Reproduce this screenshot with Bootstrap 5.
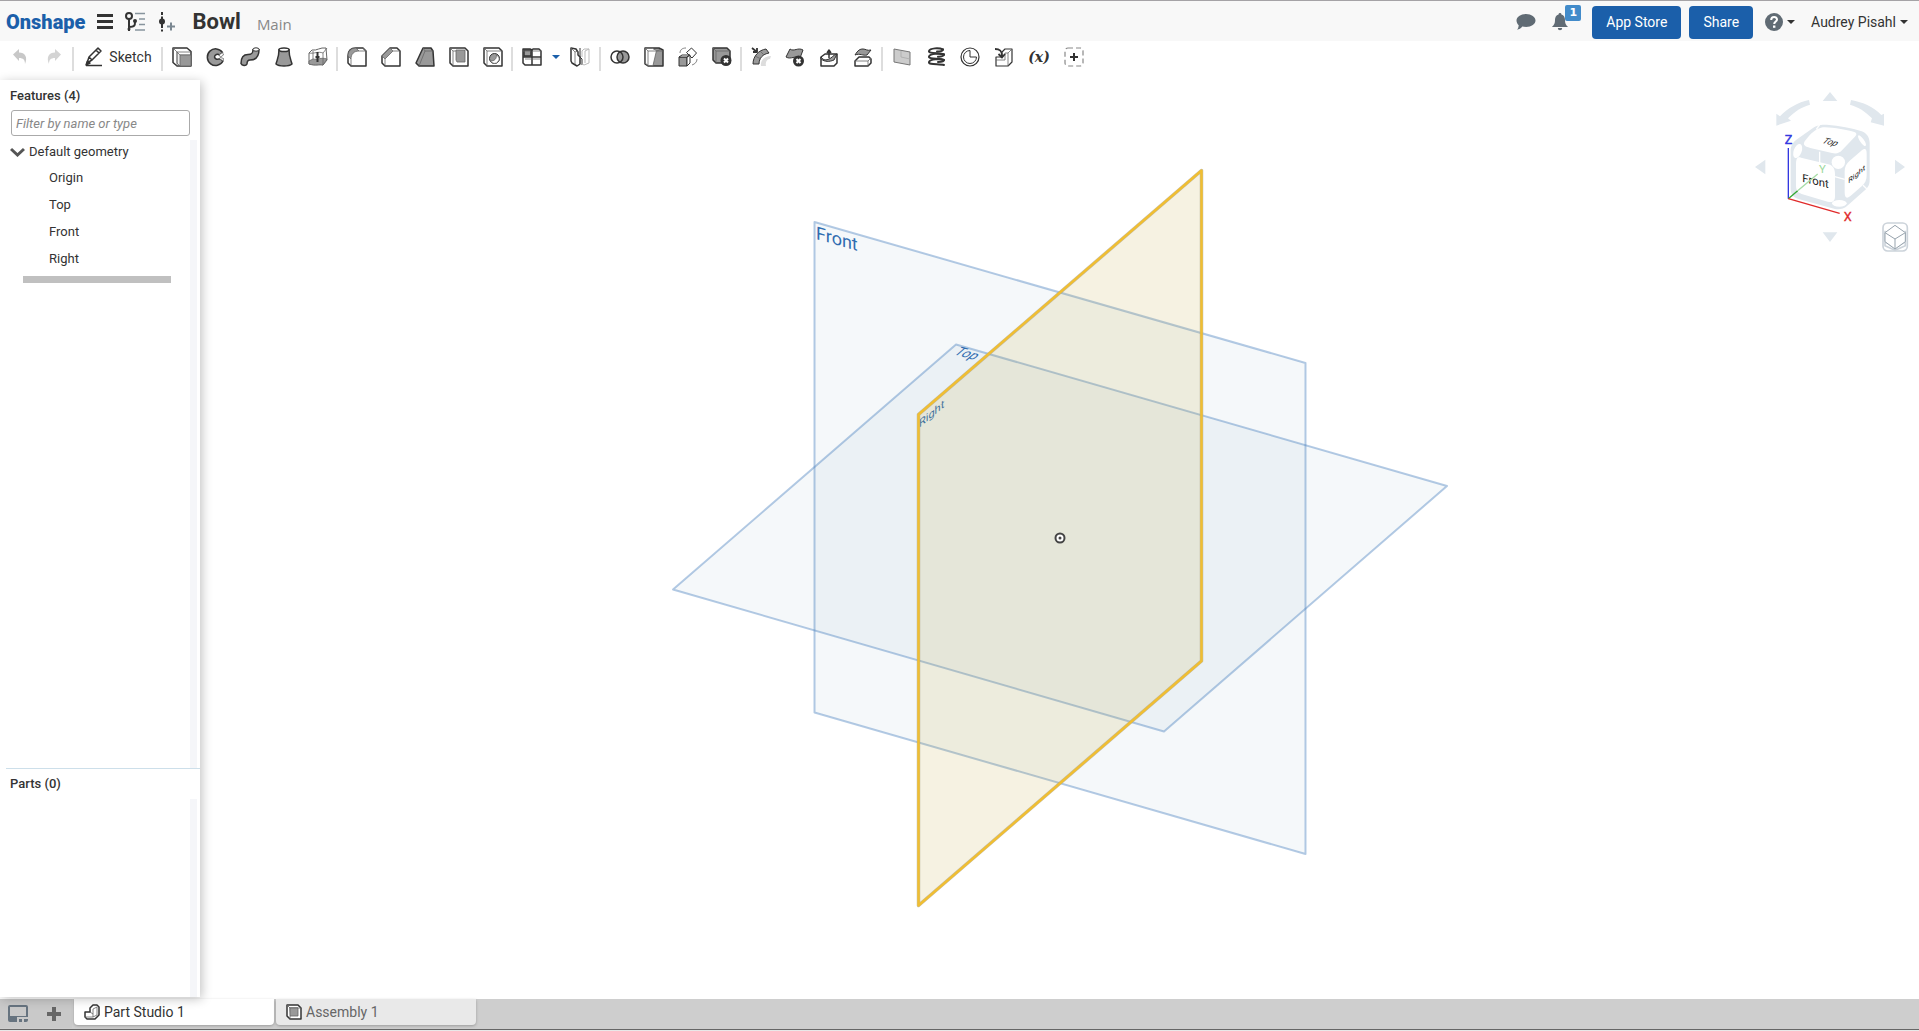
<!DOCTYPE html>
<html lang="en">
<head>
<meta charset="utf-8">
<meta name="viewport" content="width=device-width, initial-scale=1">
<title>Bowl - Onshape</title>
<link rel="stylesheet" href="https://cdn.jsdelivr.net/npm/bootstrap@5.3.0/dist/css/bootstrap.min.css">
<style>
:root { --blue: #1b5faa; --ink: #333; --slate: #606b74; }
body { font-family: Roboto, "Open Sans", sans-serif; font-size: 14px; line-height: 20px; color: var(--ink); background: #fff; }
button { font: inherit; color: inherit; background: none; border: 0; padding: 0; }
svg { display: block; }
.topbar { height: 41px; background: #f8f8f8; border-top: 1px solid #a5a3a6; padding: 2px 11px 0 6px; }
.brand { font-size: 20px; font-weight: 900; color: var(--blue); text-decoration: none; line-height: 24px; }
.doc-title { font-size: 22px; font-weight: 700; line-height: 28px; margin: 0; }
.doc-branch { font-family: "Open Sans", sans-serif; font-size: 15px; color: #888; }
.btn-blue { --bs-btn-bg: var(--blue); --bs-btn-color: #fff; --bs-btn-hover-bg: #174f8e; --bs-btn-hover-color: #fff; background: var(--blue); color: #fff; height: 33px; padding: 0 13px; font-size: 14px; line-height: 20px; border-radius: 4px; }
.alert-count { position: absolute; left: 13px; top: -8px; width: 16px; height: 16px; border-radius: 2px; background: #428bca; color: #fff; font: 700 11px/15px "DejaVu Sans", sans-serif; text-align: center; }
.arrow-down { border: 4px solid transparent; border-top-color: var(--ink); border-bottom: 0; }
.toolbar-row { height: 39px; padding: 6px 0 0 3px; background: #fff; }
.tool { width: 34px; height: 20px; display: flex; justify-content: center; align-items: center; flex: none; }
.tool-caret { width: 13px; }
.tool-wide { width: 36px; }
.tool-var { font: italic 700 14px/20px "DejaVu Serif", serif; }
.tool svg { width: 20px; height: 20px; fill: none; stroke: var(--ink); stroke-width: 1.5; stroke-linejoin: round; overflow: visible; }
.tool svg .g { fill: #999; }
.tool svg .w { fill: #fff; }
.tool svg .t { stroke-width: .8; stroke: #666; }
.tool svg .n { stroke: none; }
.tool-sketch { width: 84px; gap: 5px; }
.split { width: 2px; height: 24px; margin: 0 2px 0 1px; background: #ddd; flex: none; }
.side { width: 200px; background: #fff; box-shadow: 2px 2px 10px rgba(0,0,0,.24); z-index: 2; margin-bottom: 2px; flex: none; }
.side-title { font-size: 13px; font-weight: 500; line-height: 16px; margin: 0; padding: 8px 10px 6px; }
.filter { width: 179px; height: 26px; margin-left: 11px; border: 1px solid #aaa; border-radius: 3px; padding: 0 4px; font-size: 13px; font-style: italic; color: var(--ink); }
.filter::placeholder { color: #888; opacity: 1; }
.tracked { position: relative; margin-right: 3px; border-right: 7px solid #f5f6f9; }
.tree { list-style: none; margin: 0; padding: 0; font-size: 13px; }
.tree button { height: 27px; padding-left: 49px; width: 100%; text-align: left; display: block; }
.tree .folder { height: 24px; padding-left: 10px; display: flex; align-items: center; gap: 4px; }
.rollback { height: 7px; margin: 4px 19px 0 23px; background: #c0c0c0; }
.parts { height: 229px; flex: none; }
.parts .side-title { margin-left: 6px; border-top: 1px solid #cddfea; padding: 7px 4px; }
.viewer { position: relative; min-width: 0; }
.viewer .scene { width: 100%; height: 100%; }
.view-cube { position: absolute; top: 0; right: 0; width: 179px; height: 180px; }
.tabs-row { height: 32px; background: #cecece; border-bottom: 1px solid #e8e8e8; flex: none; padding-bottom: 1px; box-shadow: inset 0 -1px 0 #666; }
.tabs-tools { width: 72px; background: #c9c9c9; height: 29px; padding-left: 8px; gap: 19px; margin-right: 2px; }
.doc-tab { width: 200px; height: 26px; border-radius: 0 0 4px 4px; padding-left: 10px; display: flex; align-items: center; gap: 4px; font-size: 14px; margin-right: 2px; background: #e9e9e9; color: #666; box-shadow: 0 1px 3px rgba(0,0,0,.25); }
.doc-tab.current { background: #fff; color: var(--ink); }
</style>
<script src="https://cdn.jsdelivr.net/npm/bootstrap@5.3.0/dist/js/bootstrap.bundle.min.js"></script>
</head>
<body class="vh-100 d-flex flex-column overflow-hidden">
<header class="topbar d-flex align-items-center flex-shrink-0">
  <a class="brand" href="#">Onshape</a>
  <button class="ms-2 ps-1" aria-label="Menu"><svg width="16" height="16" fill="#333"><path d="M0 0h16v3H0zM0 6h16v3H0zM0 12h16v3H0z"/></svg></button>
  <button class="ms-2 ps-1" aria-label="Versions and history"><svg width="21" height="20" fill="none" stroke="#333" stroke-width="2"><circle cx="4" cy="4" r="3"/><path d="M4 7v12M4 15c6 0 6-2 6-5"/><circle cx="4" cy="17" r="1.500" fill="#333" stroke="none"/><circle cx="10" cy="9" r="2" fill="#333" stroke="none"/><path d="M10 1.500h10M14 7h6M14 12.500h6M10 18h10" stroke="#87949d" stroke-width="1.500"/></svg></button>
  <button class="ms-2 ps-1" aria-label="Create version"><svg width="18" height="20" fill="none" stroke="#333" stroke-width="2"><path d="M4 0v3M4 4.500v4M4 12v4M4 17.500v2"/><circle cx="4" cy="9.500" r="3" fill="#333" stroke="none"/><path d="M9 14.500h8M13 10.500v8" stroke="#7b8791"/></svg></button>
  <h1 class="doc-title ms-3">Bowl</h1>
  <span class="doc-branch ms-3 pt-1">Main</span>
  <div class="ms-auto d-flex align-items-center">
    <button aria-label="Comments"><svg width="20" height="18" fill="#606b74"><path d="M10 1c5.500 0 9.500 3 9.500 6.500S15.500 14 10 14c-1.500 0-2.500-.2-3.700-.5C5 15.300 3 16.300 1 16.800c1-1.200 1.500-2.500 1.700-4.600C1.300 11 .5 9.300.5 7.500.5 4 4.500 1 10 1z"/></svg></button>
    <button class="position-relative ms-3" aria-label="Notifications"><svg width="16" height="18" fill="#606b74"><path d="M8 0a1.400 1.400 0 0 1 1.400 1.500C12 2.200 13 4.500 13 7c0 4 1.300 5 3 7H0c1.700-2 3-3 3-7 0-2.500 1-4.800 3.600-5.500A1.400 1.400 0 0 1 8 0zM5.800 15h4.400a2.200 2.200 0 0 1-4.400 0z"/></svg><span class="alert-count">1</span></button>
    <button class="btn btn-blue ms-4">App Store</button>
    <button class="btn btn-blue ms-2">Share</button>
    <button class="d-flex align-items-center gap-1 ms-2 ps-1" aria-label="Help"><svg width="18" height="18"><circle cx="9" cy="9" r="9" fill="#606b74"/><path d="M6.200 7c0-4 5.800-3.800 5.800-.5C12 8.500 9.200 8.400 9.200 11" fill="none" stroke="#fff" stroke-width="2"/><path d="M8 12.500h2.400v2.300H8z" fill="#fff"/></svg><span class="arrow-down"></span></button>
    <button class="d-flex align-items-center gap-1 ms-3">Audrey Pisahl<span class="arrow-down"></span></button>
  </div>
</header>

<nav class="toolbar-row d-flex align-items-start flex-shrink-0" aria-label="Feature tools">
  <button class="tool" aria-label="Undo"><svg viewBox="0 0 20 20"><path class="n" style="fill:#c8c8c8" d="M3 7.500 9 2v3.500c6 0 9 4.500 6 11.500 0-4-1.500-6-6-6v3z"/></svg></button>
  <button class="tool" aria-label="Redo"><svg viewBox="0 0 20 20"><path class="n" style="fill:#d4d4d4" d="M17 7.500 11 2v3.500c-6 0-9 4.500-6 11.500 0-4 1.500-6 6-6v3z"/></svg></button>
  <span class="split"></span>
  <button class="tool tool-sketch"><svg viewBox="0 0 20 20"><path class="w" d="M3 16l2-6 9-9 3 3-9 9zM5 10l3 3M12 3l3 3"/><path d="M2 18.500h16"/><path fill="#333" d="M2 18l1.500-4 2.500 2z"/></svg><span>Sketch</span></button>
  <span class="split"></span>
  <button class="tool" aria-label="Extrude"><svg viewBox="0 0 20 20"><path class="w" d="M1 1h14l4 3.500V19H5l-4-3.500z"/><path class="t" d="M1 1l4 4h14M5 5v14"/><path class="g t" d="M8 8h11v11H8l-3-3V5z" fill-opacity=".2"/><path class="g t" d="M8 8h11v11H8z"/></svg></button>
  <button class="tool" aria-label="Revolve"><svg viewBox="0 0 20 20"><path class="g" d="M16.500 5.500A8.300 8.300 0 1 0 17 14l-3.500-2.500a3 3 0 0 1-5-1.500 3 3 0 0 1 5-2z"/><path class="w t" d="M13 8l3.500-2.500 1 2.500-3 2zM13.500 11.500l3.500 2.500.5-2.500-3-1z"/></svg></button>
  <button class="tool" aria-label="Sweep"><svg viewBox="0 0 20 20"><path class="g" d="M1 16.500C1 10 4 7.500 8 7.500c3.500 0 5-1 5-5h6c0 7-3.500 10.500-9 10.500-2 0-3 1.500-3 4-1 2-5 2-6-.5z"/><ellipse class="w" cx="16" cy="2.500" rx="3" ry="1.700" stroke-width="1"/></svg></button>
  <button class="tool" aria-label="Loft"><svg viewBox="0 0 20 20"><path class="g" d="M5 2.500C5 10 3.500 12 2 17c3 2.700 13 2.700 16 0-1.500-5-3-7-3-14.500z"/><ellipse class="w" cx="10" cy="2.700" rx="5" ry="1.800"/></svg></button>
  <button class="tool" aria-label="Thicken"><svg viewBox="0 0 20 20"><path class="w" d="M1 6l3-3c5 1 8-3 14-2l1 12-4 5c-4-1-7 1-14-1z" stroke="#666" stroke-width="1"/><path class="g t" d="M1 14l4-2c4 1 8-2 14 0l-4 6c-4-1-7 1-14-1z"/><path class="t" d="M1 6c5 1 9-2 14 0l4-5M15 6v12M5 4v8"/><path d="M9.500 5v10M7.500 10h4" stroke-width="2"/></svg></button>
  <span class="split"></span>
  <button class="tool" aria-label="Fillet"><svg viewBox="0 0 20 20"><path class="w" d="M1 9C1 4 4 1 9 1h7l3 3v15H4l-3-3z"/><path class="g t" d="M1 9C1 4 4 1 9 1l3 3c-5 0-8 3-8 8z"/><path class="t" d="M12 4h7M4 12v7M16 1l3 3"/></svg></button>
  <button class="tool" aria-label="Chamfer"><svg viewBox="0 0 20 20"><path class="w" d="M1 9l8-8h7l3 3v15H4l-3-3z"/><path class="g t" d="M1 9l8-8 3 3-8 8z"/><path class="t" d="M12 4h7M4 12v7"/></svg></button>
  <button class="tool" aria-label="Draft"><svg viewBox="0 0 20 20"><path class="g" d="M8 1h8l2 3 1 15H4l-3-3z"/><path class="t" d="M8 1l2 3L4 19M10 4h8"/></svg></button>
  <button class="tool" aria-label="Shell"><svg viewBox="0 0 20 20"><path class="w" d="M1 1h15l3 3v15H4l-3-3z"/><path class="g t" d="M7 3h9v12H8l-1-2z"/><path class="t" d="M1 1l3 3h3M4 4v15"/></svg></button>
  <button class="tool" aria-label="Hole"><svg viewBox="0 0 20 20"><path class="w" d="M1 1h15l3 3v15H4l-3-3z"/><path class="t" d="M1 1l3 3h15M4 4v15"/><circle class="g" cx="11.500" cy="11.500" r="5" stroke-width="1"/><path class="w t" d="M7.500 14c4 0 6-2 6-6 3 2 4 5 0 8-2 1-5 0-6-2z"/></svg></button>
  <span class="split"></span>
  <button class="tool" aria-label="Linear pattern"><svg viewBox="0 0 20 20"><path class="w" d="M1 2h7l2 1 1-1h6l2 2v14H3l-2-2z"/><path class="g" d="M2 3h7v6H2z"/><path class="t" d="M1 4h8M11 4h8M11 12h7M3 12h6"/><path d="M10 2v16M1 10h18"/></svg></button>
  <button class="tool tool-caret" aria-label="More patterns"><span class="arrow-down" style="border-top-color:#1b5faa"></span></button>
  <button class="tool tool-wide" aria-label="Mirror"><svg viewBox="0 0 20 20"><path class="w" d="M1 1l5 1 2 3v3l2 2v7l-3 2-5-3-1-2z"/><path class="t" d="M1 1l4 4v12M5 5l3-1"/><path d="M10 1v9l2 2v6" stroke-width="1"/><path style="stroke:#bbb" stroke-width="1" d="M12 10V4l2-2h5v14l-5 2-2-1M15 4v12M15 4l4-2"/></svg></button>
  <span class="split"></span>
  <button class="tool" aria-label="Boolean"><svg viewBox="0 0 20 20"><circle class="g" cx="13" cy="10" r="6"/><circle cx="7" cy="10" r="6"/></svg></button>
  <button class="tool" aria-label="Split"><svg viewBox="0 0 20 20"><path class="g" d="M1 1h14l4 2v16H4l-3-2z"/><path class="w t" d="M1.500 1.500h7l4 2L9 18.500H4.500l-3-2z"/><path class="t" d="M1 1l3 3h9M4 4v15M13 4h6M13 4l4-2"/></svg></button>
  <button class="tool" aria-label="Transform"><svg viewBox="0 0 20 20"><path class="g" d="M1 10h8v9H1z" stroke-width="1"/><path class="w" d="M1 10l3-2h8l-3 2zM9 10l3-2v8l-3 3zM8.500 5.500l5-4.500 5 5-4.500 5z" stroke-width="1"/><path class="t" d="M2 6c0-3 2-5 6-5M14 18c3-1 5-3 5-6"/></svg></button>
  <button class="tool" aria-label="Delete part"><svg viewBox="0 0 20 20"><path class="g" d="M1 1h14l3 3v12H4l-3-3z"/><path class="t" d="M1 1l3 3h14M4 4v12"/><circle cx="14" cy="13.500" r="5.500" fill="#333" stroke="none"/><path d="M12 11.500l4 4m0-4-4 4" style="stroke:#fff" stroke-width="2"/></svg></button>
  <span class="split"></span>
  <button class="tool" aria-label="Move face"><svg viewBox="0 0 20 20"><path style="fill:#ddd" class="n" d="M10 19c-1-6 4-10 10-10l-1 3c-3 0-5 3-4 7z"/><path class="g" d="M2 17c0-8 6-14 13-15l3 4C12 7 8 11 8 17z" stroke-width="1"/><path class="t" d="M4 9l6 3M9 4l4 4"/><path d="M1 1l5 4M6 1v4H2" stroke-width="1.800"/></svg></button>
  <button class="tool" aria-label="Delete face"><svg viewBox="0 0 20 20"><path class="g" d="M5 2c4 3 8-2 13 1l-3 8C10 8 6 13 1 10z" stroke-width="1"/><circle cx="13.500" cy="14" r="5.500" fill="#333" stroke="none"/><path d="M11.500 12l4 4m0-4-4 4" style="stroke:#fff" stroke-width="2"/></svg></button>
  <button class="tool" aria-label="Replace face"><svg viewBox="0 0 20 20"><path class="w" d="M2 10l4-3 12 0v9l-3 3H2z"/><path class="g" d="M2 10c3 4 5 3 8 2s4-4 8-5l-3 6c-5 2-9 2-13-1z" stroke-width="1"/><path d="M10 11V4M8 6l2-3 2 3"/></svg></button>
  <button class="tool" aria-label="Offset surface"><svg viewBox="0 0 20 20"><path class="g" d="M2 8c3-5 5-6 8-6s4 2 8 1l-4 5c-4 1-7-2-12 0z" stroke-width="1"/><path class="w" d="M2 14l4-4h10l2 2v4l-3 3H2z"/><path class="t" d="M2 14h13v5M15 14l3-3"/></svg></button>
  <span class="split"></span>
  <button class="tool" aria-label="Plane"><svg viewBox="0 0 20 20"><path d="M2 2l16 3v13L2 15z" style="fill:#ccc;stroke:#777" stroke-width="1"/><path class="t" d="M9 4v6l9 2" style="stroke:#aaa"/></svg></button>
  <button class="tool" aria-label="Helix"><svg viewBox="0 0 20 20" stroke-linecap="round"><path stroke-width="2" d="M17 2.500C13 .5 4 1 3 4s12 1.500 15 3.500"/><path stroke-width="2" d="M18 7.500C14 6 4 6.500 3 9.500s12 1.500 15 3.500"/><path stroke-width="2" d="M18 13c-4-1.500-14-1-15 2s11 1.500 15 3M17 2.500c0 1.500-4 2-6 2M18 7.500c0 2-4 2-6 2.300M18 13c0 2-4 2-6 2"/></svg></button>
  <button class="tool" aria-label="Mate connector"><svg viewBox="0 0 20 20"><circle cx="10" cy="10" r="9" stroke-width="1.200"/><path d="M10 3.500V10h6.500A6.500 6.500 0 1 1 10 3.500z" stroke-width="1"/></svg></button>
  <button class="tool" aria-label="Derived"><svg viewBox="0 0 20 20"><path class="w" d="M2 10h6V5l3-3h7v13l-4 4H2z" stroke-width="1.200"/><path class="t" d="M2 13h9V6h3l4-4M14 6v13"/><path d="M1 2c5 0 7 2 7 7M4.500 7L8 10.500 11 7" stroke-width="1.800"/></svg></button>
  <button class="tool tool-wide tool-var" aria-label="Variable">(x)</button>
  <button class="tool" aria-label="Add custom features"><svg viewBox="0 0 20 20"><rect x="1" y="1" width="18" height="18" rx="3" style="stroke:#888" stroke-width="1.200" stroke-dasharray="5 3"/><path d="M10 6v8M6 10h8" stroke-width="2"/></svg></button>
</nav>

<main class="d-flex flex-grow-1" style="min-height:0">
  <aside class="side d-flex flex-column">
    <h2 class="side-title"><label for="filter">Features (4)</label></h2>
    <input id="filter" class="filter" type="text" placeholder="Filter by name or type">
    <div class="tracked flex-grow-1 mt-1">
      <ul class="tree">
        <li><button class="folder"><svg width="15" height="10" fill="none" stroke="#555" stroke-width="3"><path d="M1 2l6.500 6L14 2"/></svg>Default geometry</button></li>
        <li><button>Origin</button></li>
        <li><button>Top</button></li>
        <li><button>Front</button></li>
        <li><button>Right</button></li>
      </ul>
      <div class="rollback"></div>
    </div>
    <section class="parts d-flex flex-column">
      <h2 class="side-title">Parts (0)</h2>
      <div class="tracked flex-grow-1"></div>
    </section>
  </aside>

  <section class="viewer flex-grow-1" aria-label="Graphics area">
    <svg class="scene" viewBox="200 80 1719 919" font-family="Roboto, sans-serif" fill="#2f6cb0">
      <g fill="#5080a8" fill-opacity=".06" stroke="#4a80be" stroke-opacity=".42" stroke-width="2" stroke-linejoin="round">
        <path d="M814.500 222 1305.500 363V854L814.500 712.500z"/>
        <path d="M956 344.500 1447 486 1164 731.500 673 589.500z"/>
      </g>
      <text transform="translate(816 239) skewY(16)" font-size="18">Front</text>
      <text transform="translate(953 354) rotate(16) skewX(-33)" font-size="13">Top</text>
      <text transform="translate(919 428) skewY(-40)" font-size="11">Right</text>
      <path d="M1201.500 170.500V661L918.500 905.500V414.500z" fill="#c3aa3c" fill-opacity=".15" stroke="#a09a80" stroke-opacity=".6" stroke-width="3.500" stroke-linejoin="round"/>
      <path d="M1201.500 170.500V661L918.500 905.500V414.500z" fill="none" stroke="#f0be32" stroke-width="2.500" stroke-linejoin="round"/>
      <circle cx="1060" cy="538" r="4.500" fill="#fff" stroke="#444" stroke-width="2"/><circle cx="1060" cy="538" r="1.500" fill="#444"/>
    </svg>
    <svg class="view-cube" viewBox="0 0 537 540" font-family="Roboto, sans-serif" fill="#e0e7ed">
      <path d="M270 36l22 27h-44zM270 486l22-29h-44zM45 261l31-22v44zM495 261l-30-22v44z"/>
      <path d="M207 60l3 14c-25 7-46 20-66 41l9 7-44 15v-36l11 8c24-25 54-42 87-49zM333 60l-3 14c25 7 46 20 66 41l-4 12 40 10v-36l-8 4c-24-25-54-38-91-45z"/>
      <path d="M260 134c40 3 75 10 105 20 15 6 23 17 24 35v110c0 20-8 25-18 35l-50 44c-10 9-22 11-36 9l-110-30c-15-5-23-15-23-30V215c0-18 5-26 17-36l50-35c12-9 24-10 41-10z"/>
      <g fill="#fff">
        <path d="M243 143c18-5 80 7 100 13 9 4 7 9 1 15l-38 40c-8 9-18 11-30 8l-65-15c-18-5-25-10-14-24 15-20 30-33 46-37z"/>
        <path d="M183 233l82 20c14 4 20 13 20 30v65c0 16-8 21-22 17l-78-23c-12-4-17-12-17-26v-62c0-18 4-25 15-21z"/>
        <path d="M314 275c0-15 5-25 15-33l34-29c12-10 17-7 17 8v65c0 14-5 24-15 33l-31 27c-14 12-20 8-20-9z"/>
        <circle cx="295" cy="247" r="20"/><ellipse cx="173" cy="213" rx="12" ry="22" transform="rotate(20 173 213)"/><ellipse cx="298" cy="370" rx="22" ry="10"/><ellipse cx="366" cy="182" rx="6" ry="19" transform="rotate(-35 366 182)"/>
      </g>
      <path d="M239 215v36M284 290l30 8M229 148l10-14M369 316l15 14" stroke="#fff" stroke-width="4"/>
      <g fill="#222">
        <text transform="translate(187 305) skewY(14)" font-size="34">Front</text>
        <text transform="translate(244 188) rotate(14) skewX(-30)" font-size="26">Top</text>
        <text transform="translate(325 311) skewY(-40)" font-size="22">Right</text>
      </g>
      <g fill="none" stroke-width="4"><path d="M145 356V204" stroke="#3338e0"/><path d="M145 356l28-24" stroke="#32a832"/><path d="M173 332l60-50" stroke="#a6dca6"/><path d="M145 356l154 44" stroke="#e02a2a"/></g>
      <g font-size="38" stroke-width="1"><text x="134" y="192" fill="#3338e0" stroke="#3338e0">Z</text><text x="237" y="278" font-size="34" fill="#9cd89c">Y</text><text x="311" y="422" fill="#e02a2a" stroke="#e02a2a">X</text></g>
      <g fill="#fff" stroke="#ccd3da" stroke-width="5" stroke-linejoin="round"><rect x="429" y="429" width="73" height="84" rx="14"/><path d="M435 452v45l30 14 31-14v-45M435 485l30 20 31-20" fill="none"/><path d="M435 458l30-22 31 22v27l-31 22-30-22z" stroke="#97a3ad" stroke-width="3"/><path d="M435 458l30 19 31-19M465 477v30" stroke="#97a3ad" stroke-width="3"/></g>
    </svg>
  </section>
</main>

<footer class="tabs-row d-flex">
  <div class="tabs-tools d-flex align-items-center">
    <button aria-label="Tab manager"><svg width="20" height="18" fill="#66737f"><path fill-rule="evenodd" d="M2 0h16a2 2 0 0 1 2 2v10H9v5H2a2 2 0 0 1-2-2V2a2 2 0 0 1 2-2zm0 2v9h16V2zM11 14h3v3h-3zM16 14h4v1a2 2 0 0 1-2 2h-2z"/></svg></button>
    <button aria-label="Add tab"><svg width="14" height="14"><path d="M7 0v14M0 7h14" stroke="#666" stroke-width="4"/></svg></button>
  </div>
  <button class="doc-tab current"><svg width="16" height="16" fill="#fff" stroke="#333" stroke-width="1.500" stroke-linejoin="round"><path d="M1 8h5V4l3-3h4l2 2v8l-4 4H3l-2-2z"/><path d="M6 8l3 2V5l4-2v8l-4 2H1M9 10v3" fill="none" stroke="#666" stroke-width=".8"/></svg>Part Studio 1</button>
  <button class="doc-tab"><svg width="16" height="16" fill="#fff" stroke="#333" stroke-width="1.500" stroke-linejoin="round"><path d="M1 1h11l3 3v11H4l-3-3z"/><path d="M3 3h9v9H4z" fill="#999" stroke="none"/><path d="M1 1l3 3h11M4 4v11M4 12h8V4" fill="none" stroke="#666" stroke-width=".8"/></svg>Assembly 1</button>
</footer>
</body>
</html>
